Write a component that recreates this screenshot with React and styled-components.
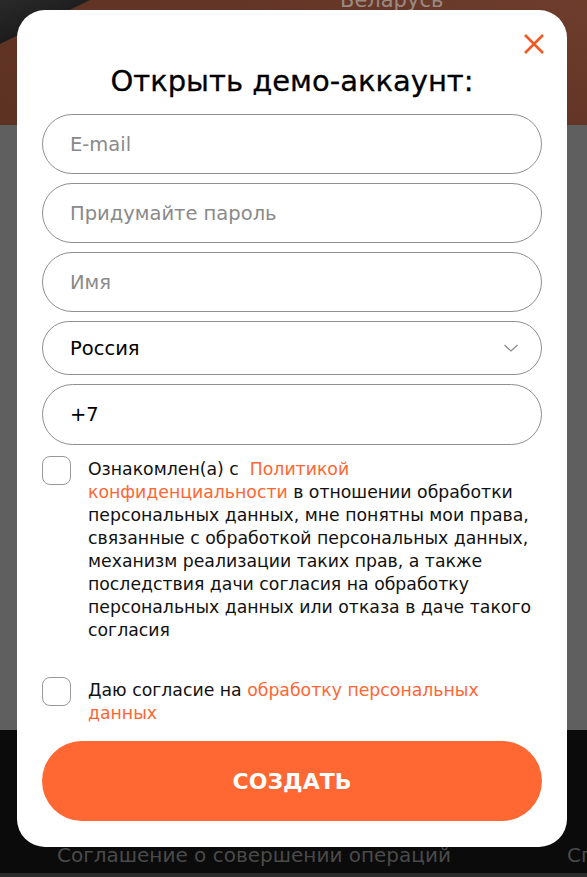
import React from 'react';
import styled, { createGlobalStyle } from 'styled-components';

const GlobalStyle = createGlobalStyle`
  html, body {
    margin: 0;
    padding: 0;
    background: #0b0b0b;
  }
  body {
    font-family: 'DejaVu Sans', 'Noto Sans', sans-serif;
    overflow: hidden;
  }
`;

const Page = styled.div`
  position: relative;
  width: 587px;
  height: 877px;
  overflow: hidden;
  display: flex;
  flex-direction: column;
`;

const Hero = styled.div`
  height: 125px;
  background: linear-gradient(200deg, #6e3d2c 0%, #633526 40%, #5e3223 100%);
  position: relative;

  .country {
    position: absolute;
    left: 340px;
    top: -12px;
    font-size: 21px;
    color: #9a8a82;
  }
`;

const Corner = styled.div`
  position: absolute;
  left: 0;
  top: 0;
  width: 90px;
  height: 44px;
  background: linear-gradient(160deg, #2a2a2a 0%, #1b1b1b 60%, #3a3a3a 100%);
  clip-path: polygon(0 0, 100% 0, 0 100%);
`;

const Middle = styled.div`
  height: 605px;
  background: #5f5f5f;
`;

const Footer = styled.div`
  flex: 1;
  background: #0b0b0b;
  border-bottom: 4px solid #2b2b2b;
  display: flex;
  align-items: flex-end;
  padding: 0 0 6px 57px;
  gap: 116px;
  white-space: nowrap;

  span {
    font-size: 20px;
    color: #4a4a4a;
  }
`;

const Modal = styled.div`
  position: absolute;
  left: 17px;
  top: 10px;
  width: 550px;
  height: 837px;
  box-sizing: border-box;
  background: #fff;
  border-radius: 28px;
  padding: 52px 25px 0;
  display: flex;
  flex-direction: column;
`;

const Close = styled.button`
  position: absolute;
  right: 22px;
  top: 23px;
  width: 22px;
  height: 22px;
  border: 0;
  padding: 0;
  background: none;
  cursor: pointer;
`;

const Title = styled.h2`
  margin: 0 0 14px;
  text-align: center;
  font-size: 29px;
  line-height: 38px;
  font-weight: 500;
  color: #000;
  -webkit-text-stroke: 0.3px #000;
`;

const Fields = styled.div`
  display: flex;
  flex-direction: column;
  gap: 9px;
`;

const Field = styled.div`
  height: ${(p) => p.$h || 60}px;
  box-sizing: border-box;
  border: 1px solid #8f8f8f;
  border-radius: 40px;
  padding: 0 22px 0 27px;
  display: flex;
  align-items: center;
  justify-content: space-between;
  font-size: 19.5px;
  color: ${(p) => (p.$filled ? '#000' : '#8a8a8a')};
`;

const Checks = styled.div`
  margin-top: 11px;
  display: flex;
  flex-direction: column;
  gap: 35px;
`;

const CheckRow = styled.label`
  display: flex;
  gap: 17px;
  align-items: flex-start;
`;

const Box = styled.span`
  flex: none;
  width: 29px;
  height: 29px;
  box-sizing: border-box;
  border: 1px solid #999;
  border-radius: 8px;
`;

const CheckText = styled.p`
  margin: 0;
  width: 450px;
  font-size: 17.3px;
  line-height: 23px;
  color: #111;
  padding-top: 2px;
  white-space: nowrap;

  a {
    color: #ff6633;
    text-decoration: none;
  }
`;

const Submit = styled.button`
  margin-top: 16px;
  height: 80px;
  border: 0;
  border-radius: 40px;
  background: #ff6733;
  color: #fff;
  font-family: inherit;
  font-size: 22px;
  font-weight: 700;
  cursor: pointer;
`;

const App = () => {
  return (
    <>
      <GlobalStyle />
      <Page>
        <Hero>
          <Corner />
          <span className='country'>Беларусь</span>
        </Hero>
        <Middle />
        <Footer>
          <span>Соглашение о совершении операций</span>
          <span>Спецификация</span>
        </Footer>

        <Modal>
          <Close aria-label='close'>
            <svg width='22' height='22' viewBox='0 0 22 22'>
              <path d='M2 2 L20 20 M20 2 L2 20' stroke='#f05a24' strokeWidth='2.6' fill='none' />
            </svg>
          </Close>
          <Title>Открыть демо-аккаунт:</Title>
          <Fields>
            <Field>E-mail</Field>
            <Field>Придумайте пароль</Field>
            <Field>Имя</Field>
            <Field $h={54} $filled>
              Россия
              <svg width='16' height='10' viewBox='0 0 16 10'>
                <path d='M1.5 2 L8 8 L14.5 2' stroke='#888' strokeWidth='1.2' fill='none' />
              </svg>
            </Field>
            <Field $h={61} $filled>+7</Field>
          </Fields>
          <Checks>
            <CheckRow>
              <Box />
              <CheckText>
                Ознакомлен(а) с&nbsp; <a href='#'>Политикой</a>
                <br />
                <a href='#'>конфиденциальности</a> в отношении обработки
                <br />
                персональных данных, мне понятны мои права,
                <br />
                связанные с обработкой персональных данных,
                <br />
                механизм реализации таких прав, а также
                <br />
                последствия дачи согласия на обработку
                <br />
                персональных данных или отказа в даче такого
                <br />
                согласия
              </CheckText>
            </CheckRow>
            <CheckRow>
              <Box />
              <CheckText>
                Даю согласие на <a href='#'>обработку персональных</a>
                <br />
                <a href='#'>данных</a>
              </CheckText>
            </CheckRow>
          </Checks>
          <Submit>СОЗДАТЬ</Submit>
        </Modal>
      </Page>
    </>
  );
};

export default App;
